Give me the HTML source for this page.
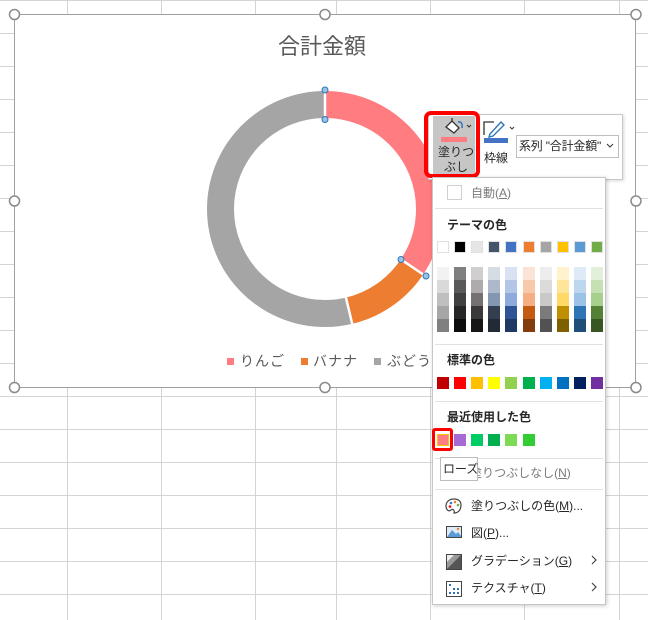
<!DOCTYPE html>
<html><head><meta charset="utf-8"><style>
*{margin:0;padding:0;box-sizing:border-box}
body{width:648px;height:620px;position:relative;overflow:hidden;background:#fff;font-family:"Liberation Sans","Noto Sans CJK JP",sans-serif;color:#262626}
.a{position:absolute}
.t{position:absolute;font-size:12px;white-space:nowrap;line-height:14px}
.sw{position:absolute;width:12px;height:12px}
.sep{position:absolute;left:435px;width:168px;height:1px;background:#e1e1e1}
</style></head><body>
<svg class="a" style="left:0;top:0" width="648" height="620">
<g stroke="#d4d4d4" stroke-width="1">
<line x1="67.5" y1="0" x2="67.5" y2="620"/><line x1="161.5" y1="0" x2="161.5" y2="620"/><line x1="255.5" y1="0" x2="255.5" y2="620"/><line x1="336.5" y1="0" x2="336.5" y2="620"/><line x1="430.5" y1="0" x2="430.5" y2="620"/><line x1="524.5" y1="0" x2="524.5" y2="620"/><line x1="619.5" y1="0" x2="619.5" y2="620"/>
<line x1="0" y1="0.5" x2="648" y2="0.5"/><line x1="0" y1="33.5" x2="648" y2="33.5"/><line x1="0" y1="66.5" x2="648" y2="66.5"/><line x1="0" y1="99.5" x2="648" y2="99.5"/><line x1="0" y1="132.5" x2="648" y2="132.5"/><line x1="0" y1="165.5" x2="648" y2="165.5"/><line x1="0" y1="198.5" x2="648" y2="198.5"/><line x1="0" y1="231.5" x2="648" y2="231.5"/><line x1="0" y1="264.5" x2="648" y2="264.5"/><line x1="0" y1="297.5" x2="648" y2="297.5"/><line x1="0" y1="330.5" x2="648" y2="330.5"/><line x1="0" y1="363.5" x2="648" y2="363.5"/><line x1="0" y1="396.5" x2="648" y2="396.5"/><line x1="0" y1="429.5" x2="648" y2="429.5"/><line x1="0" y1="462.5" x2="648" y2="462.5"/><line x1="0" y1="495.5" x2="648" y2="495.5"/><line x1="0" y1="528.5" x2="648" y2="528.5"/><line x1="0" y1="561.5" x2="648" y2="561.5"/><line x1="0" y1="594.5" x2="648" y2="594.5"/>
</g>
<rect x="14.5" y="14.5" width="621" height="373" fill="#fff" stroke="#a0a0a0"/>
<g transform="rotate(-90 325 209)" fill="none" stroke-width="27">
<circle cx="325" cy="209" r="104.5" stroke="#ff7c80" stroke-dasharray="225.4 700"/>
<circle cx="325" cy="209" r="104.5" stroke="#ed7d31" stroke-dasharray="78.6 700" stroke-dashoffset="-225.4"/>
<circle cx="325" cy="209" r="104.5" stroke="#a5a5a5" stroke-dasharray="352.6 700" stroke-dashoffset="-304"/>
</g>
<g stroke="#fff" stroke-width="2.5">
<line x1="325" y1="89" x2="325" y2="120"/><line x1="400.8" y1="259.3" x2="424" y2="275"/><line x1="345.9" y1="297.5" x2="352.5" y2="325"/>
</g>
<g fill="#9cc3e5" stroke="#2e75b5" stroke-width="1">
<circle cx="325" cy="90" r="3"/><circle cx="325" cy="119.5" r="3"/><circle cx="401" cy="259.5" r="3"/><circle cx="426" cy="276" r="3"/>
</g>
<g fill="#fff" stroke="#8a8a8a" stroke-width="1.5">
<circle cx="14.5" cy="14.5" r="5"/><circle cx="325" cy="14.5" r="5"/><circle cx="636" cy="14.5" r="5"/><circle cx="14.5" cy="201" r="5"/><circle cx="636" cy="201" r="5"/><circle cx="14.5" cy="387.5" r="5"/><circle cx="325" cy="387.5" r="5"/><circle cx="636" cy="387.5" r="5"/>
</g>
<rect x="227" y="358" width="7" height="7" fill="#ff7c80"/>
<rect x="301" y="358" width="7" height="7" fill="#ed7d31"/>
<rect x="374" y="358" width="7" height="7" fill="#a5a5a5"/>
</svg>
<div class="t" style="left:278px;top:34px;font-size:22px;line-height:26px;color:#595959">合計金額</div>
<div class="t" style="left:240px;top:353px;font-size:14px;line-height:17px;color:#595959;letter-spacing:1px">りんご</div>
<div class="t" style="left:313px;top:353px;font-size:14px;line-height:17px;color:#595959;letter-spacing:1px">バナナ</div>
<div class="t" style="left:387px;top:353px;font-size:14px;line-height:17px;color:#595959;letter-spacing:1px">ぶどう</div>

<div class="a" style="left:428px;top:114px;width:195px;height:66px;background:#fff;border:1px solid #c8c8c8;box-shadow:1px 1px 3px rgba(0,0,0,.15)"></div>
<div class="a" style="left:433px;top:116px;width:42px;height:58px;background:#c6c6c6"></div>
<div class="a" style="left:424px;top:111px;width:56px;height:67px;border:4px solid #f00;border-radius:7px"></div>
<svg class="a" style="left:443px;top:118px" width="30" height="20"><path d="M3 9 L9 3 L16 10 L11 15 Z" fill="#fff" stroke="#333" stroke-width="1.3"/><path d="M9 3 L9 0" stroke="#333" stroke-width="1.3"/><path d="M15 4 Q20 3 19 10" fill="none" stroke="#2e75b5" stroke-width="1.5"/><path d="M24 7 l2 2 l2 -2" fill="none" stroke="#333"/></svg>
<div class="a" style="left:441px;top:137px;width:26px;height:5px;background:#ff7c80"></div>
<div class="t" style="left:438px;top:145px;font-size:12px">塗りつ</div>
<div class="t" style="left:444px;top:160px;font-size:12px">ぶし</div>
<svg class="a" style="left:482px;top:118px" width="36" height="20"><path d="M2 17 V4 H12" fill="none" stroke="#333" stroke-width="1.3"/><path d="M8 16 L19 4 L22 7 L11 18 L7 19 Z" fill="#fff" stroke="#2e75b5" stroke-width="1.4"/><path d="M28 9 l2 2 l2 -2" fill="none" stroke="#333"/></svg>
<div class="a" style="left:484px;top:138px;width:24px;height:5px;background:#4472c4"></div>
<div class="t" style="left:484px;top:151px;font-size:12px">枠線</div>
<div class="a" style="left:516px;top:135px;width:103px;height:23px;border:1px solid #bfbfbf;background:#fff"></div>
<div class="t" style="left:519px;top:139px;font-size:12px;letter-spacing:-0.2px">系列 "合計金額"</div>
<svg class="a" style="left:606px;top:143px" width="8" height="6"><path d="M1 1 l3 3 l3 -3" fill="none" stroke="#333"/></svg>

<div class="a" style="left:432px;top:177px;width:174px;height:428px;background:#fff;border:1px solid #c6c6c6;box-shadow:1px 1px 4px rgba(0,0,0,.2)"></div>
<div class="a" style="left:447px;top:185px;width:15px;height:15px;border:1px solid #d0d0d0"></div>
<div class="t" style="left:471px;top:186px;color:#7a7a7a">自動(<u>A</u>)</div>
<div class="sep" style="top:208px"></div>
<div class="t" style="left:447px;top:218px;font-weight:bold">テーマの色</div>
<div class="sep" style="top:344px"></div>
<div class="t" style="left:447px;top:353px;font-weight:bold">標準の色</div>
<div class="sep" style="top:401px"></div>
<div class="t" style="left:447px;top:410px;font-weight:bold">最近使用した色</div>
<div class="sep" style="top:458px"></div>
<div class="t" style="left:470px;top:466px;color:#7a7a7a">塗りつぶしなし(<u>N</u>)</div>
<div class="sep" style="top:489px"></div>
<div class="t" style="left:471px;top:499px">塗りつぶしの色(<u>M</u>)...</div>
<div class="t" style="left:471px;top:526px">図(<u>P</u>)...</div>
<div class="t" style="left:471px;top:554px">グラデーション(<u>G</u>)</div>
<div class="t" style="left:471px;top:581px">テクスチャ(<u>T</u>)</div>
<svg class="a" style="left:589px;top:554px" width="10" height="40"><path d="M3 2 l4 4 l-4 4" fill="none" stroke="#444" stroke-width="1.2"/><path d="M3 29 l4 4 l-4 4" fill="none" stroke="#444" stroke-width="1.2"/></svg>
<svg class="a" style="left:445px;top:497px" width="18" height="100">
<path d="M9 2 C3 2 1 6 1 9 C1 13 4 15 6 13 C8 11 10 14 9 16 C14 16 16 12 16 8 C16 4 13 2 9 2Z" fill="#fff" stroke="#444" stroke-width="1.2"/>
<circle cx="6" cy="6" r="1.3" fill="#4472c4"/><circle cx="10" cy="5" r="1.3" fill="#ed7d31"/><circle cx="13" cy="8" r="1.3" fill="#70ad47"/><circle cx="5" cy="9.5" r="1.3" fill="#ff0000"/>
<rect x="1.5" y="29.5" width="15" height="11" fill="#deebf6" stroke="#444"/><path d="M2 40 L7 33 L11 37 L13 35 L16 39 V40Z" fill="#5b9bd5"/><circle cx="13" cy="32" r="1.2" fill="#ed7d31"/>
<rect x="1.5" y="57.5" width="15" height="15" fill="#999" stroke="#444"/><path d="M2 72 L16 58 L16 72Z" fill="#555"/><path d="M2 58 L9 58 L2 65Z" fill="#eee"/>
<rect x="1.5" y="84.5" width="15" height="15" fill="#fff" stroke="#444"/><g fill="#2e75b5"><rect x="4" y="87" width="2" height="2"/><rect x="8" y="91" width="2" height="2"/><rect x="12" y="95" width="2" height="2"/><rect x="12" y="91" width="2" height="2"/><rect x="8" y="95" width="2" height="2"/><rect x="4" y="95" width="2" height="2"/></g>
</svg>

<div id="sw"></div>
<script>
var theme=["#ffffff","#000000","#e7e6e6","#44546a","#4472c4","#ed7d31","#a5a5a5","#ffc000","#5b9bd5","#70ad47"];
var sh=[["#f2f2f2","#d9d9d9","#bfbfbf","#a6a6a6","#808080"],["#7f7f7f","#595959","#404040","#262626","#0d0d0d"],["#d0cece","#aeabab","#757171","#3a3838","#161616"],["#d6dce4","#adb9ca","#8497b0","#333f4f","#222a35"],["#d9e2f3","#b4c6e7","#8eaadb","#2f5496","#1f3864"],["#fbe4d5","#f7caac","#f4b083","#c55a11","#833c0b"],["#ededed","#dbdbdb","#c9c9c9","#7b7b7b","#525252"],["#fff2cc","#ffe599","#ffd966","#bf8f00","#7f6000"],["#deebf6","#bdd7ee","#9cc3e5","#2e75b5","#1f4e79"],["#e2efd9","#c5e0b3","#a8d08d","#538135","#375623"]];
var std=["#c00000","#ff0000","#ffc000","#ffff00","#92d050","#00b050","#00b0f0","#0070c0","#002060","#7030a0"];
var rec=["#ff7c80","#a66bd3","#00cc66","#00b050","#7ed957","#33cc33"];
var h="";
for(var i=0;i<10;i++){var x=437+i*17.1;
h+='<div class="sw" style="left:'+x+'px;top:241px;background:'+theme[i]+';border:1px solid #e0e0e0"></div>';
for(var j=0;j<5;j++)h+='<div class="a" style="left:'+x+'px;top:'+(267+j*13)+'px;width:12px;height:13px;background:'+sh[i][j]+'"></div>';
h+='<div class="sw" style="left:'+x+'px;top:377px;background:'+std[i]+'"></div>';}
for(var k=0;k<6;k++){var x2=437+k*17.1;h+='<div class="sw" style="left:'+x2+'px;top:434px;background:'+rec[k]+'"></div>';}
h+='<div class="a" style="left:432px;top:428px;width:21px;height:23px;border:3px solid #f00;border-radius:3px"></div>';
h+='<div class="a" style="left:437px;top:434px;width:12px;height:12px;border:1px solid #ffc000;background:#ff7c80"></div>';
h+='<div class="a" style="left:440px;top:457px;width:38px;height:24px;background:#fff;border:1px solid #bcbcbc"></div>';
h+='<div class="t" style="left:443px;top:462px;font-size:12px">ローズ</div>';
document.getElementById("sw").innerHTML=h;
</script>
</body></html>
